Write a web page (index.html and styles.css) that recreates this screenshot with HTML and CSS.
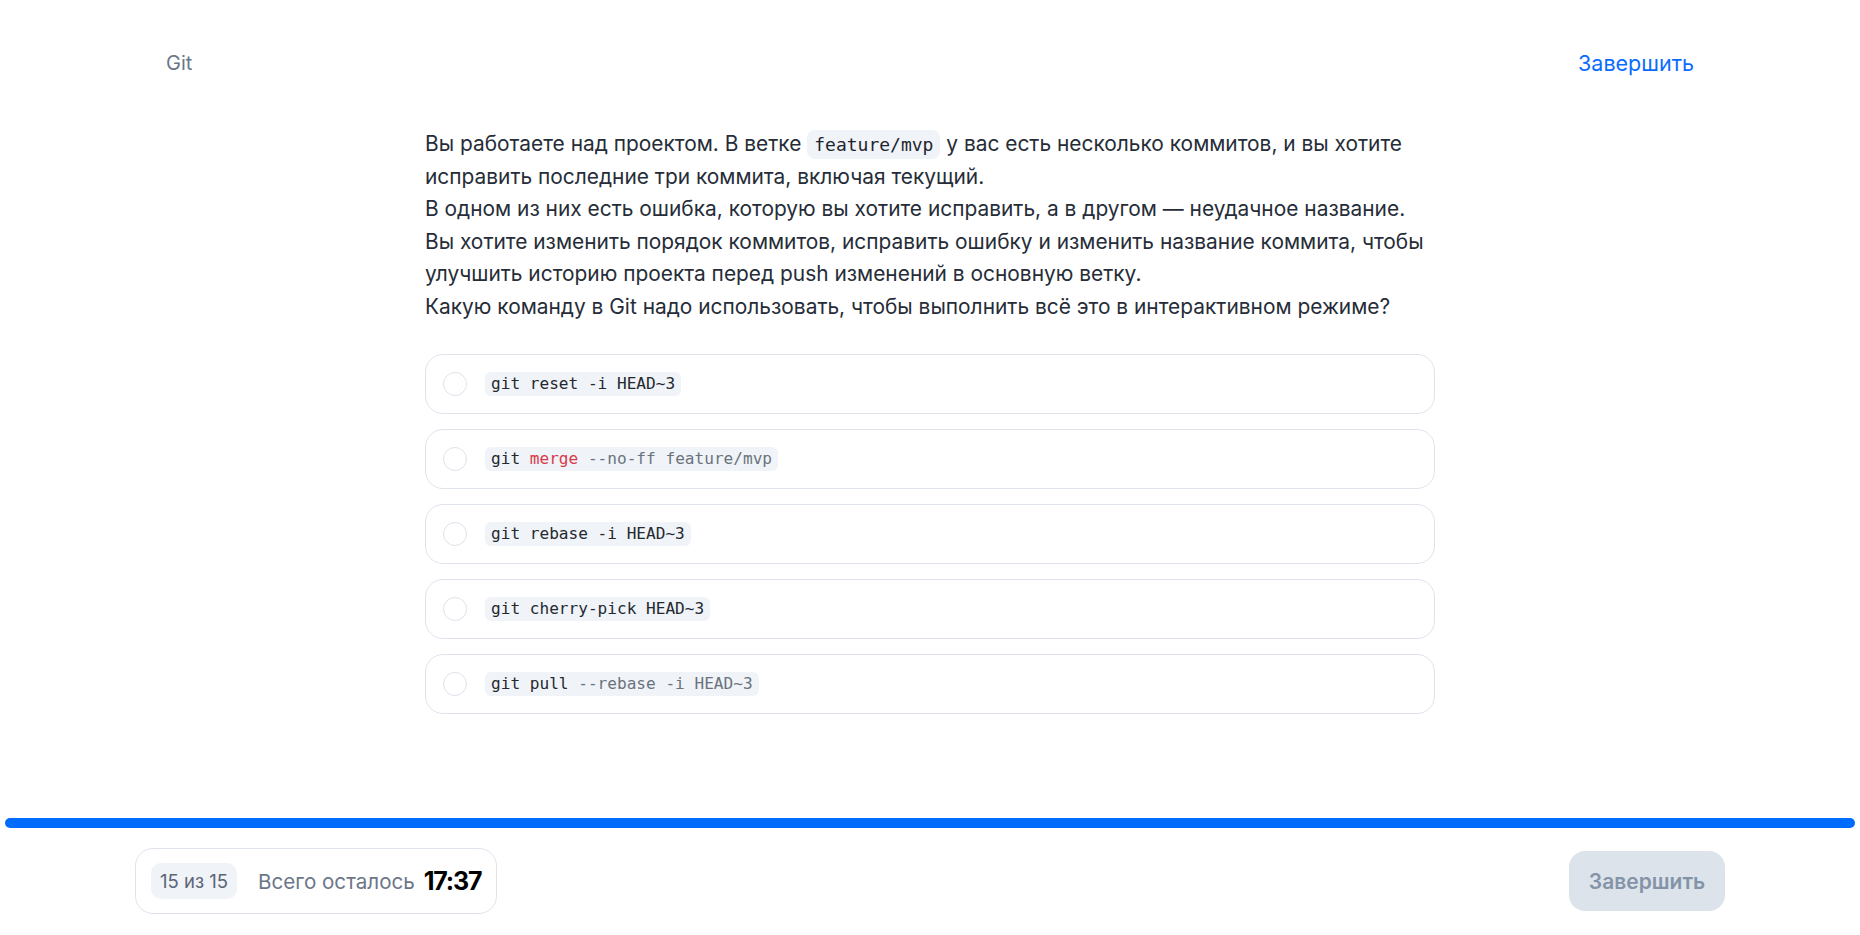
FILE: index.html
```html
<!DOCTYPE html>
<html lang="ru">
<head>
<meta charset="utf-8">
<title>Git</title>
<link rel="stylesheet" href="styles.css">
</head>
<body>
<div class="page">
  <header class="topbar">
    <span class="topic">Git</span>
    <a class="finish-link" href="#">Завершить</a>
  </header>
  <main class="content">
    <div class="question">
      <p>Вы работаете над проектом. В ветке <code class="inline-code">feature/mvp</code> у вас есть несколько коммитов, и вы хотите исправить последние три коммита, включая текущий.</p>
      <p>В одном из них есть ошибка, которую вы хотите исправить, а в другом — неудачное название.</p>
      <p>Вы хотите изменить порядок коммитов, исправить ошибку и изменить название коммита, чтобы улучшить историю проекта перед push изменений в основную ветку.</p>
      <p>Какую команду в Git надо использовать, чтобы выполнить всё это в интерактивном режиме?</p>
    </div>
    <div class="options">
      <label class="option"><span class="radio"></span><code class="opt-code">git reset -i HEAD~3</code></label>
      <label class="option"><span class="radio"></span><code class="opt-code">git <span class="kw">merge</span> <span class="muted">--no-ff feature/mvp</span></code></label>
      <label class="option"><span class="radio"></span><code class="opt-code">git rebase -i HEAD~3</code></label>
      <label class="option"><span class="radio"></span><code class="opt-code">git cherry-pick HEAD~3</code></label>
      <label class="option"><span class="radio"></span><code class="opt-code">git pull <span class="muted">--rebase -i HEAD~3</span></code></label>
    </div>
  </main>
  <div class="progress"></div>
  <footer class="bottombar">
    <div class="status">
      <span class="counter">15 из 15</span>
      <span class="remaining">Всего осталось</span>
      <span class="timer">17:37</span>
    </div>
    <button class="finish-btn" type="button">Завершить</button>
  </footer>
</div>
</body>
</html>
```

FILE: styles.css
```css
* { box-sizing: border-box; }

html, body {
  margin: 0;
  padding: 0;
  background: #ffffff;
}

body {
  font-family: Inter, "Noto Sans", sans-serif;
  color: #252a33;
}

.page {
  height: 100vh;
  display: flex;
  flex-direction: column;
}

.topbar {
  display: flex;
  justify-content: space-between;
  align-items: center;
  padding: 49px 166px 0 166px;
  line-height: 28px;
}

.topic {
  font-size: 20px;
  color: #6b7789;
}

.finish-link {
  font-size: 21.5px;
  color: #0a6cff;
  text-decoration: none;
}

.content {
  flex: 1;
  display: flex;
  flex-direction: column;
  align-items: center;
  padding-top: 51px;
}

.question {
  width: 1016px;
  margin-left: 6px;
  font-size: 20.9px;
  line-height: 32.5px;
  color: #262d38;
}

.question p {
  margin: 0;
}

.inline-code {
  font-family: "DejaVu Sans Mono", monospace;
  font-size: 18px;
  line-height: 24px;
  padding: 4px 7px;
  border-radius: 8px;
  background: #f0f3f8;
  color: #1e2530;
}

.options {
  width: 1010px;
  margin-top: 31px;
  display: flex;
  flex-direction: column;
  gap: 15px;
}

.option {
  height: 60px;
  border: 1px solid #dfe4ec;
  border-radius: 18px;
  display: flex;
  align-items: center;
  padding-left: 17px;
  gap: 18px;
  cursor: pointer;
}

.radio {
  width: 24px;
  height: 24px;
  border-radius: 50%;
  border: 1.5px solid #dde3ea;
  flex: none;
}

.opt-code {
  font-family: "DejaVu Sans Mono", monospace;
  font-size: 16.1px;
  line-height: 24px;
  padding: 0 6px;
  border-radius: 6px;
  background: #f0f3f8;
  color: #24292f;
}

.kw { color: #d73a49; }
.muted { color: #6a737d; }

.progress {
  height: 10px;
  margin: 0 5px;
  border-radius: 5px;
  background: #006cff;
  flex: none;
}

.bottombar {
  display: flex;
  justify-content: space-between;
  align-items: center;
  padding: 20px 135px 21px 135px;
  flex: none;
}

.status {
  height: 66px;
  border: 1px solid #dfe4ec;
  border-radius: 18px;
  display: flex;
  align-items: center;
  padding: 0 15px 0 15px;
}

.counter {
  width: 86px;
  height: 36px;
  border-radius: 10px;
  background: #f0f3f8;
  color: #5a6575;
  font-size: 18.5px;
  display: flex;
  align-items: center;
  justify-content: center;
}

.remaining {
  margin-left: 21px;
  font-size: 20.6px;
  color: #6b7789;
}

.timer {
  margin-left: 9px;
  font-size: 25px;
  font-weight: 700;
  letter-spacing: -1.2px;
  color: #000000;
}

.finish-btn {
  width: 156px;
  height: 60px;
  border: none;
  border-radius: 16px;
  background: #dce3eb;
  color: #8494a8;
  font-family: Inter, "Noto Sans", sans-serif;
  font-size: 21px;
  font-weight: 600;
  padding: 0;
}
```
